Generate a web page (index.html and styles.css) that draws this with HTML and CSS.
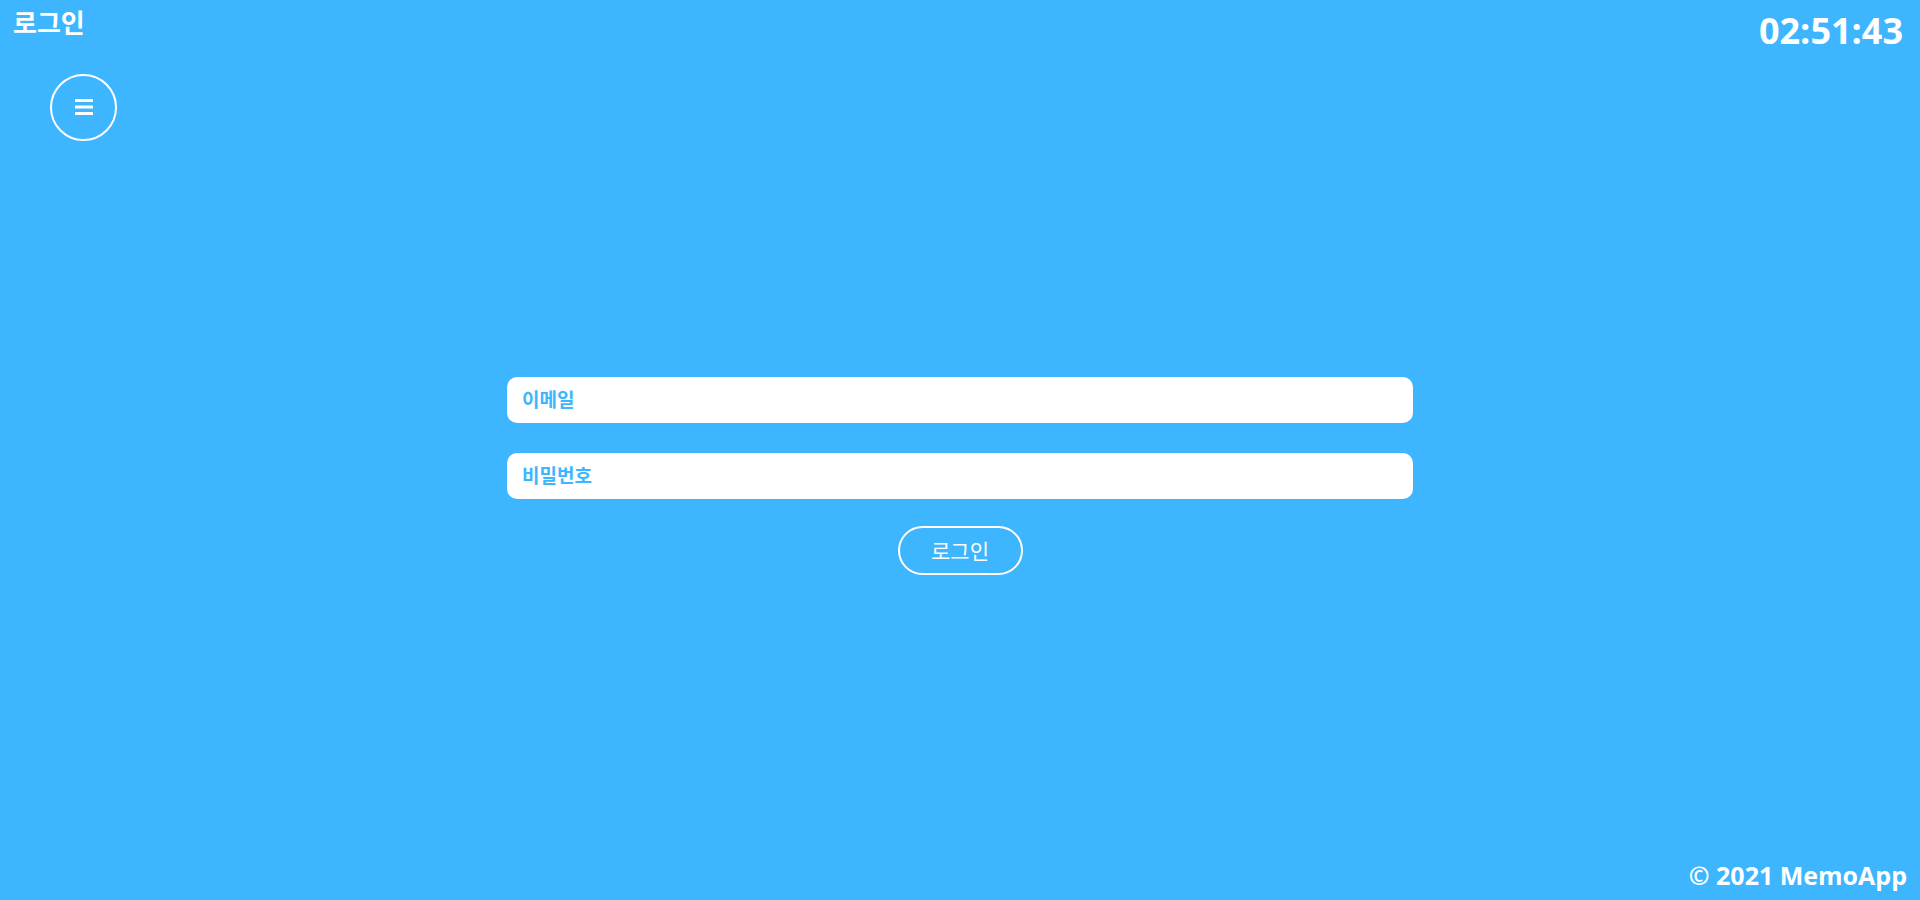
FILE: index.html
```html
<!DOCTYPE html>
<html lang="ko">
<head>
<meta charset="utf-8">
<title>로그인</title>
<link rel="stylesheet" href="styles.css">
</head>
<body>
<div class="page">
  <header class="header">
    <h1 class="title">로그인</h1>
    <div class="clock">02:51:43</div>
  </header>
  <div class="menu-row">
    <button class="menu-btn" aria-label="메뉴">
      <svg width="18" height="17" viewBox="0 0 18 17"><rect x="0" y="0" width="18" height="3" fill="#fff"/><rect x="0" y="6.5" width="18" height="3" fill="#fff"/><rect x="0" y="13" width="18" height="3" fill="#fff"/></svg>
    </button>
  </div>
  <main class="main">
    <form class="login-form">
      <input class="field" type="email" placeholder="이메일">
      <input class="field" type="password" placeholder="비밀번호">
      <button class="login-btn" type="button">로그인</button>
    </form>
  </main>
  <footer class="footer">© 2021 MemoApp</footer>
</div>
</body>
</html>
```
FILE: styles.css
```css
* { box-sizing: border-box; }
html, body { margin: 0; padding: 0; height: 100%; }
body {
  background: #3db5ff;
  color: #fff;
  font-family: "Open Sans", "Noto Sans CJK KR", sans-serif;
}
.page {
  height: 100vh;
  display: flex;
  flex-direction: column;
}
.header {
  display: flex;
  justify-content: space-between;
  align-items: flex-start;
  padding: 4px 17px 0 13px;
  height: 74px;
}
.title {
  margin: 0;
  font-family: "Noto Sans CJK KR", sans-serif;
  font-size: 26px;
  font-weight: 700;
  line-height: 36px;
}
.clock {
  margin-top: 2px;
  font-family: "Open Sans", sans-serif;
  font-size: 36px;
  font-weight: 700;
  line-height: 50px;
}
.menu-row {
  padding-left: 50px;
}
.menu-btn {
  width: 67px;
  height: 67px;
  border-radius: 50%;
  border: 2px solid #fff;
  background: transparent;
  display: flex;
  align-items: center;
  justify-content: center;
  padding: 0;
  cursor: pointer;
}
.main {
  flex: 1;
  padding-top: 236px;
}
.login-form {
  width: 906px;
  margin: 0 auto;
  display: flex;
  flex-direction: column;
  align-items: center;
  gap: 30px;
}
.field {
  width: 100%;
  height: 46px;
  border: none;
  border-radius: 10px;
  background: #fff;
  padding: 0 15px 4px;
  font-family: "Noto Sans CJK KR", sans-serif;
  font-size: 19px;
  font-weight: 700;
  color: #3db5ff;
  outline: none;
}
.field::placeholder {
  color: #3db5ff;
  opacity: 1;
}
.login-btn {
  margin-top: -3px;
  width: 125px;
  height: 49px;
  border: 2px solid #fff;
  border-radius: 25px;
  background: transparent;
  color: #fff;
  font-family: "Noto Sans CJK KR", sans-serif;
  font-size: 21px;
  font-weight: 400;
  padding: 0 0 2px;
  cursor: pointer;
}
.footer {
  text-align: right;
  padding: 0 13px 8px 0;
  font-family: "Open Sans", "Noto Sans CJK KR", sans-serif;
  font-size: 25px;
  font-weight: 700;
  line-height: 34px;
}
```
